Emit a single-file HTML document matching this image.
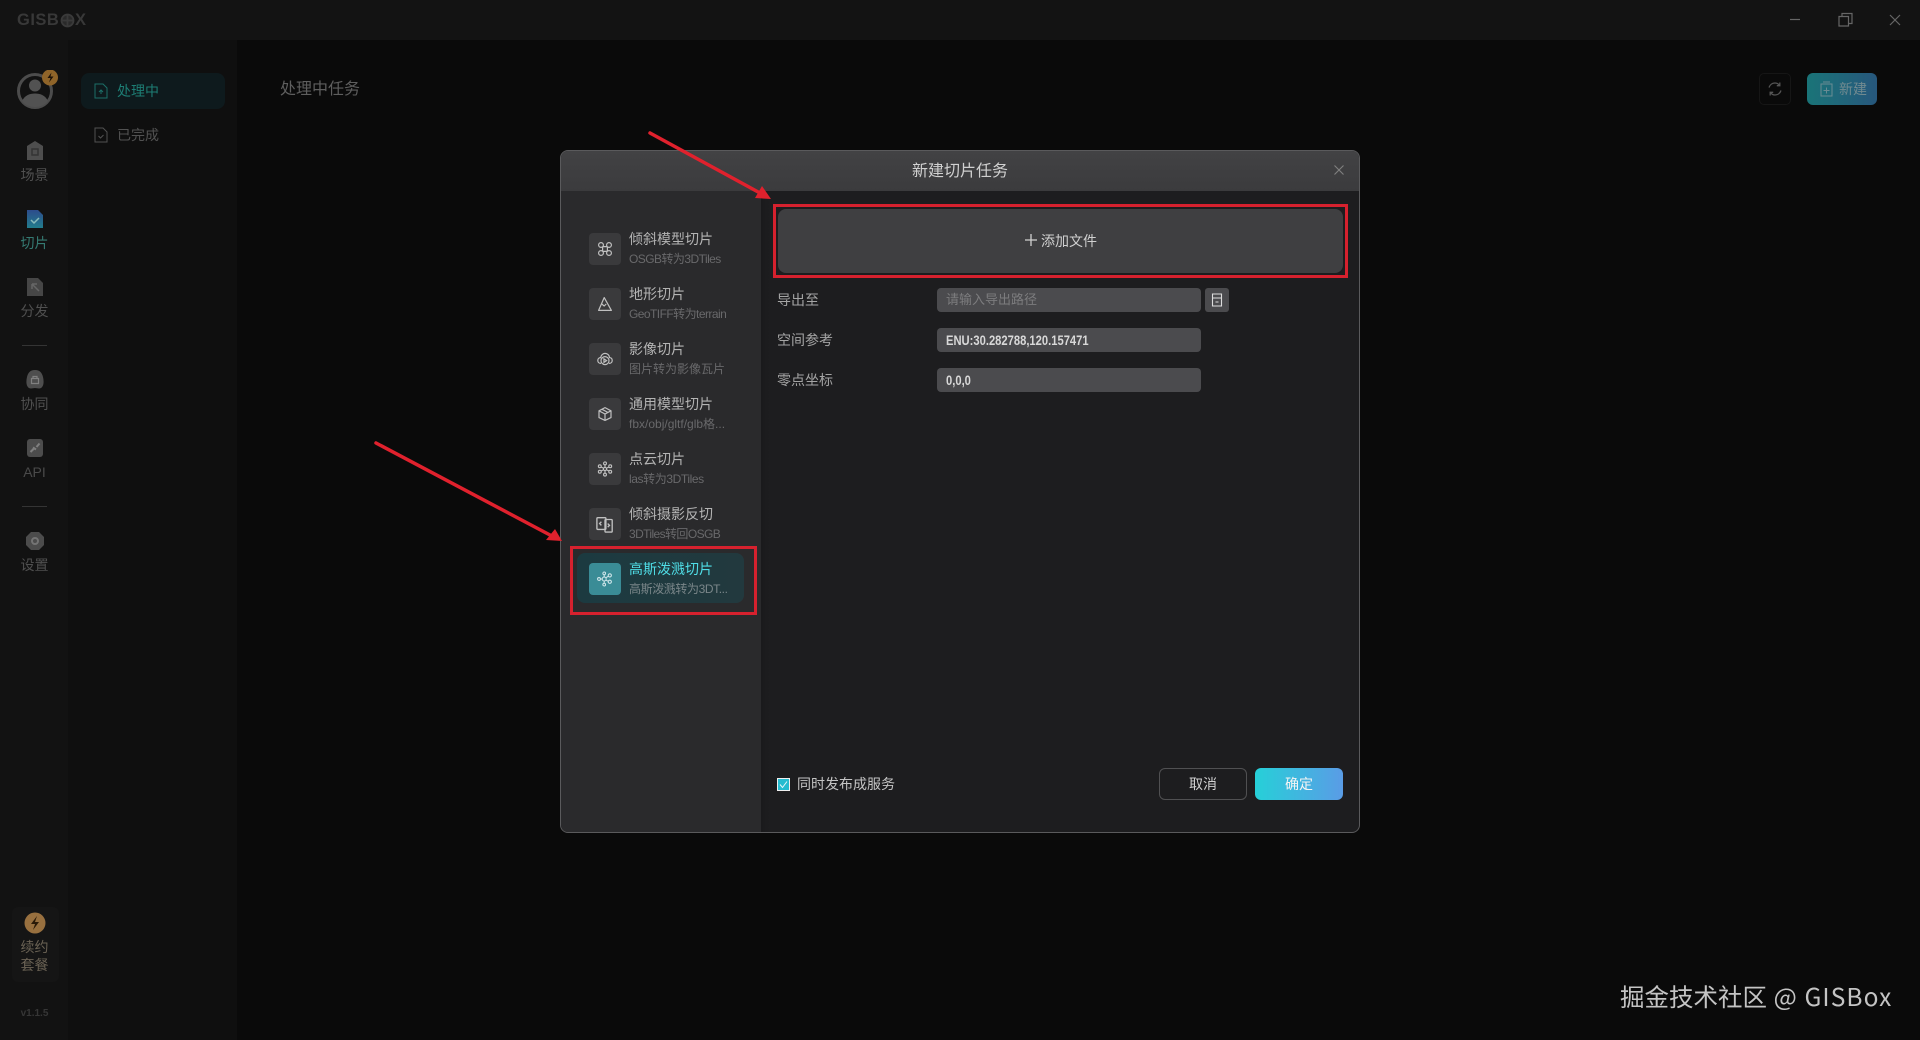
<!DOCTYPE html>
<html lang="zh"><head><meta charset="utf-8"><title>GISBox</title>
<style>
*{box-sizing:border-box;margin:0;padding:0}
html,body{width:1920px;height:1040px;overflow:hidden;background:#0a0a0a}
body{position:relative;font-family:"Liberation Sans","Noto Sans CJK SC",sans-serif;font-size:14px}
.a{position:absolute}
.t{position:absolute;white-space:nowrap;line-height:20px}
.nav{position:absolute;left:0;width:69px;text-align:center;font-size:14px;line-height:20px;color:#505050}
.ib{position:absolute;left:589px;width:32px;height:32px;border-radius:4px;background:#3a3a3c}
.ib svg{position:absolute;left:8px;top:8px;width:16px;height:16px}
.tt{position:absolute;left:629px;font-size:14px;line-height:20px;color:#b4b4b4;white-space:nowrap}
.st{position:absolute;left:629px;font-size:12px;line-height:18px;color:#69696b;white-space:nowrap}
.lb{position:absolute;left:777px;font-size:14px;line-height:20px;color:#a4a4a4;white-space:nowrap}
.in{position:absolute;left:937px;width:264px;height:24px;border-radius:4px;background:#4b4b4e;padding-left:9px;line-height:24px;color:#ddd;overflow:hidden;white-space:nowrap}
.nr{display:inline-block;font-weight:700;font-size:14px;color:#d8d8d8;transform:scaleX(.8);transform-origin:0 50%}
svg{display:block}
</style></head><body>

<!-- window chrome -->
<div class="a" style="left:0;top:0;width:1920px;height:40px;background:#131313"></div>
<div class="a" style="left:0;top:40px;width:68px;height:1000px;background:#121212"></div>
<div class="a" style="left:68px;top:40px;width:169px;height:1000px;background:#0f0f0f"></div>

<div class="t" style="left:17px;top:10px;font-weight:700;font-size:16.5px;color:#383838;letter-spacing:.5px">GISB</div>
<svg class="a" style="left:60px;top:13px" width="15" height="15" viewBox="0 0 15 15" fill="#2a2a2a" stroke="#3a3a3a" stroke-width="1.800"><circle cx="7.500" cy="7.500" r="6"/><path d="M1.500 7.500h12M7.500 1.500v12"/></svg>
<div class="t" style="left:75px;top:10px;font-weight:700;font-size:16.5px;color:#383838">X</div>

<svg class="a" style="left:1785px;top:10px" width="120" height="22" viewBox="0 0 120 22" fill="none" stroke="#666" stroke-width="1.200"><path d="M5 9.500h10"/><path d="M54 6.500h9.500v9.500h-9.500z"/><path d="M57 6.500v-3h10v10h-3.500"/><path d="M105 5l10 10M115 5l-10 10"/></svg>

<!-- avatar -->
<svg class="a" style="left:15px;top:70px" width="46" height="42" viewBox="0 0 46 42"><circle cx="20" cy="21" r="16.500" fill="none" stroke="#4c4c4c" stroke-width="3"/><circle cx="20" cy="15.500" r="6" fill="#525252"/><path d="M7 31c3-6 8-7.500 13-7.500s10 1.500 13 7.500c-3 4-8 6-13 6s-10-2-13-6z" fill="#525252"/><circle cx="35" cy="7.500" r="8" fill="#8f6429"/><path d="M36.500 2.500l-4 5.500h3l-1.500 4.500 4.500-6h-3z" fill="#1d1208"/></svg>

<!-- left rail icons -->
<svg class="a" style="left:27px;top:141px" width="16" height="19" viewBox="0 0 16 19"><path d="M8 0l8 5v14H0V5z" fill="#4e4e4e"/><rect x="5" y="8" width="6" height="6" fill="none" stroke="#343434" stroke-width="1.500"/></svg>
<div class="nav" style="top:165px">场景</div>
<svg class="a" style="left:27px;top:210px" width="16" height="18" viewBox="0 0 16 18"><defs><linearGradient id="g1" x1="0" y1="0" x2="0" y2="1"><stop offset="0" stop-color="#2d4c8c"/><stop offset="1" stop-color="#227d8c"/></linearGradient></defs><path d="M0 0h11l5 5v13H0z" fill="url(#g1)"/><path d="M4 10l3 3 5-5" fill="none" stroke="#8bb" stroke-width="1.500"/></svg>
<div class="nav" style="top:233px;color:#357a72">切片</div>
<svg class="a" style="left:27px;top:278px" width="16" height="18" viewBox="0 0 16 18"><path d="M0 0h11l5 5v13H0z" fill="#464646"/><path d="M12 13L5 6M5 6h5M5 6v5" fill="none" stroke="#666" stroke-width="1.500"/></svg>
<div class="nav" style="top:301px">分发</div>
<div class="a" style="left:22px;top:345px;width:25px;height:1px;background:#343434"></div>
<svg class="a" style="left:26px;top:370px" width="18" height="20" viewBox="0 0 18 20"><path d="M9 0c5 0 7 3 8 7 1 4 1 9-2 11-2 1-4 0-6 0s-4 1-6 0C0 16 0 11 1 7 2 3 4 0 9 0z" fill="#4e4e4e"/><path d="M5.500 8.500h7v5h-7zM7 8.500V6.500h4v2" fill="none" stroke="#808080" stroke-width="1.200"/></svg>
<div class="nav" style="top:394px">协同</div>
<svg class="a" style="left:27px;top:439px" width="16" height="18" viewBox="0 0 16 18"><rect width="16" height="18" rx="3" fill="#4c4c4c"/><path d="M3.500 13l3-3M9.500 8l3-3.500M6 8.500l3 2" stroke="#808080" stroke-width="2" fill="none"/></svg>
<div class="nav" style="top:462px;color:#4a4a4a">API</div>
<div class="a" style="left:22px;top:506px;width:25px;height:1px;background:#343434"></div>
<svg class="a" style="left:26px;top:532px" width="18" height="18" viewBox="0 0 18 18"><path d="M5 0h8l5 5v8l-5 5H5l-5-5V5z" fill="#4c4c4c"/><circle cx="9" cy="9" r="3" fill="none" stroke="#747474" stroke-width="2"/></svg>
<div class="nav" style="top:555px">设置</div>

<div class="a" style="left:12px;top:907px;width:47px;height:75px;border-radius:6px;background:#151515"></div>
<svg class="a" style="left:24px;top:912px" width="22" height="22" viewBox="0 0 22 22"><circle cx="11" cy="11" r="10.500" fill="#98703f"/><path d="M13 4l-6 8h4l-2 6 6-8h-4z" fill="#2a1a08"/></svg>
<div class="nav" style="top:937px;color:#6a6254">续约</div>
<div class="nav" style="top:955px;color:#6a6254">套餐</div>
<div class="nav" style="top:1004px;font-size:10px;color:#363636;font-weight:700">v1.1.5</div>

<!-- second sidebar -->
<div class="a" style="left:81px;top:73px;width:144px;height:36px;border-radius:8px;background:#0e1a1d"></div>
<svg class="a" style="left:94px;top:83px" width="14" height="16" viewBox="0 0 14 16" fill="none" stroke="#1c6f68" stroke-width="1"><path d="M1 1h8l4 4v10H1z"/><path d="M7 11V7M5 9l2-2 2 2"/></svg>
<div class="t" style="left:117px;top:81px;color:#1d7d74">处理中</div>
<svg class="a" style="left:94px;top:127px" width="14" height="16" viewBox="0 0 14 16" fill="none" stroke="#525252" stroke-width="1"><path d="M1 1h8l4 4v10H1z"/><path d="M4.500 9l2 2 3-3"/></svg>
<div class="t" style="left:117px;top:125px;color:#525252">已完成</div>
<div class="t" style="left:280px;top:79px;font-size:16px;line-height:22px;color:#5e5e5e">处理中任务</div>

<div class="a" style="left:1759px;top:73px;width:32px;height:32px;border:1px solid #161616;border-radius:5px"></div>
<svg class="a" style="left:1767px;top:81px" width="16" height="16" viewBox="0 0 16 16" fill="none" stroke="#565656" stroke-width="1.300"><path d="M2 6.500C3 3.500 5.500 2 8 2c2 0 3.500 1 4.500 2.500"/><path d="M14 9.500C13 12.500 10.500 14 8 14c-2 0-3.500-1-4.500-2.500"/><path d="M12.800 1.500v3.200H9.800M3.200 14.500v-3.200h3"/></svg>
<div class="a" style="left:1807px;top:73px;width:70px;height:32px;border-radius:6px;background:linear-gradient(90deg,#1a7478,#27577c)"></div>
<svg class="a" style="left:1820px;top:81px" width="13" height="16" viewBox="0 0 13 16" fill="none" stroke="#6a8c94" stroke-width="1"><path d="M1 3h11v12H1zM3 1h7"/><path d="M6.500 6.500v6M3.500 9.500h6"/></svg>
<div class="t" style="left:1839px;top:79px;color:#718a90">新建</div>

<!-- dialog -->
<div class="a" style="left:560px;top:150px;width:800px;height:683px;border-radius:8px;background:#1d1d1f;border:1px solid #5a5a5c;overflow:hidden">
  <div class="a" style="left:0;top:0;width:798px;height:40px;background:linear-gradient(#424244,#3b3b3d)"></div>
  <div class="a" style="left:0;top:40px;width:200px;height:642px;background:#2a2a2c"></div>
  <div class="a" style="left:200px;top:40px;width:9px;height:642px;background:linear-gradient(90deg,#1a1a1c,#1d1d1f)"></div>
</div>
<div class="t" style="left:860px;top:161px;width:200px;text-align:center;font-size:16px;line-height:22px;color:#d0d0d0">新建切片任务</div>
<svg class="a" style="left:1334px;top:165px" width="10" height="10" viewBox="0 0 10 10" stroke="#808080" stroke-width="1.100"><path d="M.5 .5l9 9M9.500 .5l-9 9"/></svg>

<div class="ib" style="top:233px"><svg viewBox="0 0 20 20" fill="none" stroke="#c0c0c0" stroke-width="1.500"><circle cx="5" cy="5" r="3"/><circle cx="15" cy="5" r="3"/><circle cx="5" cy="15" r="3"/><circle cx="15" cy="15" r="3"/><rect x="7" y="7" width="6" height="6" rx="1"/></svg></div>
<div class="tt" style="top:229px">倾斜模型切片</div><div class="st" style="top:250px;letter-spacing:-.55px">OSGB转为3DTiles</div>

<div class="ib" style="top:288px"><svg viewBox="0 0 20 20" fill="none" stroke="#c0c0c0" stroke-width="1.500" stroke-linejoin="round"><path d="M2 18L9 2l9 16z"/><path d="M6 10l3 2.500 2.500-2.500"/></svg></div>
<div class="tt" style="top:284px">地形切片</div><div class="st" style="top:305px;letter-spacing:-.55px">GeoTIFF转为terrain</div>

<div class="ib" style="top:343px"><svg viewBox="0 0 20 20" fill="none" stroke="#c0c0c0" stroke-width="1.500"><path d="M5 15.500c-2.500 0-4-1.700-4-3.700 0-2 1.500-3.500 3.500-3.500C5 5 7.500 3 10 3c3 0 5.500 2.300 5.700 5.200 2 .2 3.300 1.700 3.300 3.600 0 2-1.500 3.700-4 3.700"/><circle cx="10" cy="12" r="5"/><path d="M8.700 9.800v4.400l3.300-2.200z"/></svg></div>
<div class="tt" style="top:339px">影像切片</div><div class="st" style="top:360px">图片转为影像瓦片</div>

<div class="ib" style="top:398px"><svg viewBox="0 0 20 20" fill="none" stroke="#c0c0c0" stroke-width="1.500" stroke-linejoin="round"><path d="M10 2l7.500 4v8.500L10 18l-7.500-3.500V6z"/><path d="M2.500 6L10 10l7.500-4M10 10v8M6 4l7.500 4"/></svg></div>
<div class="tt" style="top:394px">通用模型切片</div><div class="st" style="top:415px">fbx/obj/gltf/glb格...</div>

<div class="ib" style="top:453px"><svg viewBox="0 0 20 20" fill="none" stroke="#c0c0c0" stroke-width="1.400"><circle cx="10" cy="10" r="2"/><circle cx="10" cy="3" r="1.800"/><circle cx="10" cy="17" r="1.800"/><circle cx="3.500" cy="6.500" r="1.800"/><circle cx="16.500" cy="6.500" r="1.800"/><circle cx="3.500" cy="13.500" r="1.800"/><circle cx="16.500" cy="13.500" r="1.800"/><path d="M10 5v3M5 7.500l3.300 1.500M15 7.500l-3.300 1.500M5 12.500L8.300 11M15 12.500L11.700 11M10 12v3"/></svg></div>
<div class="tt" style="top:449px">点云切片</div><div class="st" style="top:470px;letter-spacing:-.4px">las转为3DTiles</div>

<div class="ib" style="top:508px"><svg style="left:7px;top:7px;width:18px;height:18px" viewBox="0 0 20 20" fill="none" stroke="#c0c0c0" stroke-width="1.500"><rect x="1" y="3" width="10" height="13" rx="1"/><rect x="10" y="5" width="8" height="14" rx="1"/><path d="M6 7.500L4 9.500l2 2M13 9.500l2 2-2 2"/></svg></div>
<div class="tt" style="top:504px">倾斜摄影反切</div><div class="st" style="top:525px;letter-spacing:-.6px">3DTiles转回OSGB</div>

<div class="a" style="left:577px;top:553px;width:167px;height:50px;border-radius:8px;background:linear-gradient(90deg,#1c3a40,#22393e)"></div>
<div class="ib" style="top:563px;background:#3a8c96"><svg viewBox="0 0 20 20" fill="none" stroke="#cfe6ea" stroke-width="1.300"><circle cx="9" cy="10" r="2.500"/><circle cx="9" cy="3" r="1.700"/><circle cx="2.500" cy="10" r="1.800"/><circle cx="9" cy="17" r="1.700"/><circle cx="16" cy="5.500" r="2"/><circle cx="16" cy="13.500" r="2"/><path d="M9 4.700v2.800M4.300 10h2.200M9 12.500v2.800M11 8.500l3.300-2M11 11.500l3.300 1.300"/></svg></div>
<div class="tt" style="top:559px;color:#4fdde6">高斯泼溅切片</div><div class="st" style="top:580px;color:#7a8689;letter-spacing:-.4px">高斯泼溅转为3DT...</div>

<div class="a" style="left:778px;top:209px;width:565px;height:64px;border-radius:8px;background:#3f3f41"></div>
<svg class="a" style="left:1024px;top:233px" width="14" height="14" viewBox="0 0 14 14" stroke="#d0d0d0" stroke-width="1.300"><path d="M7 1v12M1 7h12"/></svg>
<div class="t" style="left:1041px;top:231px;color:#d0d0d0">添加文件</div>

<div class="lb" style="top:290px">导出至</div>
<div class="in" style="top:288px;color:#7c7c7e;font-size:13px">请输入导出路径</div>
<div class="a" style="left:1205px;top:288px;width:24px;height:24px;border-radius:3px;background:#4b4b4e"></div>
<svg class="a" style="left:1210px;top:293px" width="14" height="14" viewBox="0 0 14 14" fill="none" stroke="#ddd" stroke-width="1.100"><path d="M2.500 1h9v12h-9zM2.500 5h9M5.500 9h3"/></svg>
<div class="lb" style="top:330px">空间参考</div>
<div class="in" style="top:328px"><span class="nr">ENU:30.282788,120.157471</span></div>
<div class="lb" style="top:370px">零点坐标</div>
<div class="in" style="top:368px"><span class="nr">0,0,0</span></div>

<div class="a" style="left:777px;top:778px;width:13px;height:13px;background:#25bcd0;border:1px solid #f0f0f0"></div>
<svg class="a" style="left:779px;top:780px" width="9" height="9" viewBox="0 0 9 9" fill="none" stroke="#e8f8fa" stroke-width="1"><path d="M1 4.500l2.500 3 4.500-6"/></svg>
<div class="t" style="left:797px;top:774px;color:#c4c4c4">同时发布成服务</div>
<div class="a" style="left:1159px;top:768px;width:88px;height:32px;border-radius:6px;border:1px solid #505052;background:#1d1d1f;text-align:center;line-height:30px;color:#d0d0d0">取消</div>
<div class="a" style="left:1255px;top:768px;width:88px;height:32px;border-radius:6px;background:linear-gradient(90deg,#26d0d8,#5a9ce6);text-align:center;line-height:32px;color:#f4f4f4">确定</div>

<!-- annotations -->
<div class="a" style="left:570px;top:546px;width:187px;height:69px;border:3px solid #d6212e"></div>
<div class="a" style="left:773px;top:204px;width:575px;height:74px;border:3px solid #d6212e"></div>
<svg class="a" style="left:0;top:0" width="1920" height="1040" fill="#e0212d" stroke="#e0212d">
  <path d="M650 133L760 193" stroke-width="3.500" stroke-linecap="round" fill="none"/>
  <path d="M771 199L755 198L762 186z" stroke="none"/>
  <path d="M376 443L550 535" stroke-width="3.500" stroke-linecap="round" fill="none"/>
  <path d="M562 541L546 540L555 529z" stroke="none"/>
</svg>

<div class="t" style="left:1620px;top:980px;font-family:'Noto Sans CJK SC',sans-serif;font-size:24.500px;line-height:34px;color:#c4c4c4">掘金技术社区<span style="letter-spacing:1.100px"> @ GISBox</span></div>
</body></html>
